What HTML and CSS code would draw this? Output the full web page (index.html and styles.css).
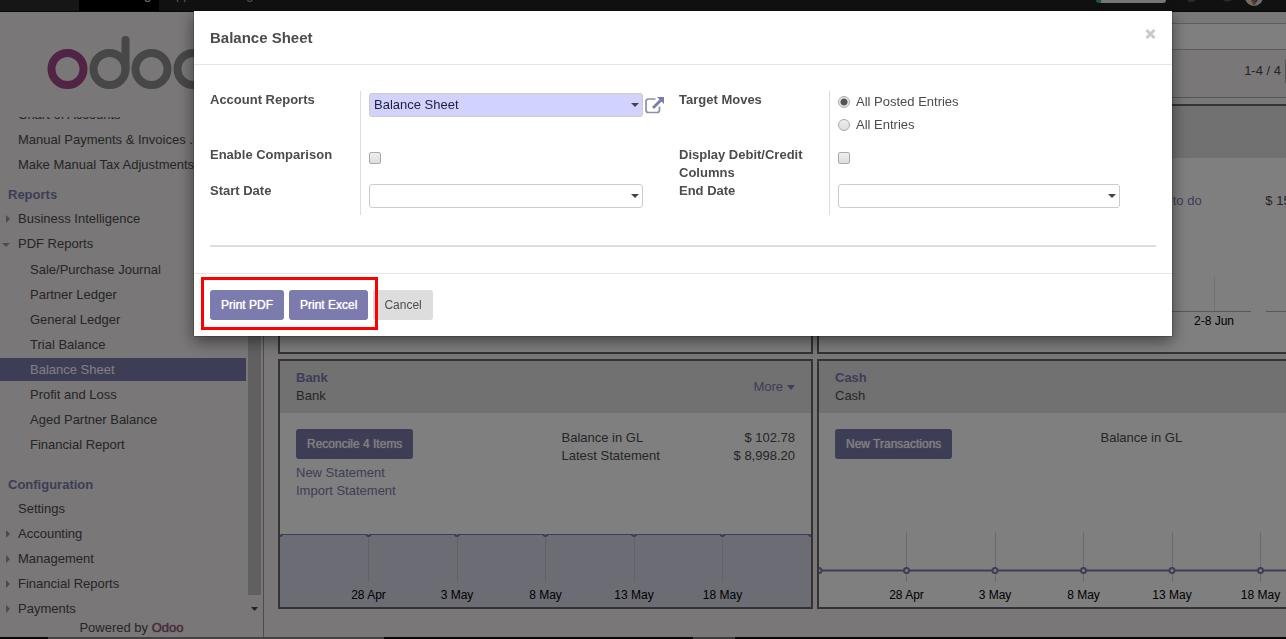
FILE: index.html
```html
<!DOCTYPE html>
<html lang="en">
<head>
<meta charset="utf-8">
<title>Balance Sheet - Odoo</title>
<link rel="stylesheet" href="styles.css">
</head>
<body>
<div class="app">
  <nav class="topbar">
    <a class="tab tab-first" href="#">Dashboard</a>
    <a class="tab active" href="#">Accounting</a>
    <a class="tab" href="#">Apps</a>
    <a class="tab" href="#">Settings</a>
    <span class="spacer"></span>
    <span class="planner"></span>
    <svg class="tray" width="50" height="4" viewBox="0 0 50 4"><path d="M2 0h9l-3 2H4zM37 0h10l-4 2z" fill="#555"/></svg>
    <svg class="avatar" width="18" height="7" viewBox="0 0 18 7"><path d="M0-3a9 9 0 0 0 18 0z" fill="#ddd"/><path d="M6 0l3 6 3-6z" fill="#a87448"/><path d="M11 0l-1 4 3-4z" fill="#558"/></svg>
  </nav>
  <div class="columns">
    <aside class="sidebar">
      <div class="logo">
        <svg width="170" height="56" viewBox="0 0 170 56" fill="none" stroke-width="8">
          <circle cx="20.500" cy="34" r="16" stroke="#a24689"/>
          <g stroke="#8f8f8f"><circle cx="62.500" cy="34" r="16"/><circle cx="104.500" cy="34" r="16"/><circle cx="146.500" cy="34" r="16"/><path d="M78.500 34V5" stroke-linecap="round"/></g>
        </svg>
      </div>
      <div class="menu-area">
        <div class="menu">
          <ul>
            <li><a href="#">Chart of Accounts</a></li>
            <li><a href="#">Manual Payments &amp; Invoices ...</a></li>
            <li><a href="#">Make Manual Tax Adjustments</a></li>
          </ul>
          <h4>Reports</h4>
          <ul>
            <li class="closed"><a href="#">Business Intelligence</a></li>
            <li class="open"><a href="#">PDF Reports</a>
              <ul class="sub">
                <li><a href="#">Sale/Purchase Journal</a></li>
                <li><a href="#">Partner Ledger</a></li>
                <li><a href="#">General Ledger</a></li>
                <li><a href="#">Trial Balance</a></li>
                <li><a class="selected" href="#">Balance Sheet</a></li>
                <li><a href="#">Profit and Loss</a></li>
                <li><a href="#">Aged Partner Balance</a></li>
                <li><a href="#">Financial Report</a></li>
              </ul>
            </li>
          </ul>
          <h4 class="config">Configuration</h4>
          <ul>
            <li><a href="#">Settings</a></li>
            <li class="closed"><a href="#">Accounting</a></li>
            <li class="closed"><a href="#">Management</a></li>
            <li class="closed"><a href="#">Financial Reports</a></li>
            <li class="closed"><a href="#">Payments</a></li>
          </ul>
        </div>
        <div class="scrollbar"><div class="thumb"></div><div class="arrow"><svg width="7" height="4" viewBox="0 0 7 4"><path d="M0 0h7L3.500 4z" fill="#444"/></svg></div></div>
      </div>
      <footer class="powered">Powered by <a href="#">Odoo</a></footer>
    </aside>
    <main class="main">
      <div class="searchbar"></div>
      <div class="control"><span>1-4 / 4</span><span class="pager"></span></div>
      <div class="cards">
        <section class="card"><header></header></section>
        <section class="card">
          <header></header>
          <div class="card-body invoices">
            <div></div>
            <dl><div><dt><a href="#">4 Payments to do</a></dt><dd>$ 15,000.00</dd></div></dl>
          </div>
          <svg class="chart" viewBox="0 0 531 80">
            <path d="M395.500 4V39" stroke="#e4e4e4"/><path d="M300 39.500H432M447 39.500H531" stroke="#a9b4bf"/>
            <text x="395" y="53">2-8 Jun</text>
          </svg>
        </section>
        <section class="card">
          <header><div><a class="title" href="#">Bank</a><div>Bank</div></div>
            <a class="more" href="#">More <svg width="8" height="5" viewBox="0 0 8 5"><path d="M0 0h8L4 5z" fill="#7c7bad"/></svg></a></header>
          <div class="card-body">
            <div><button class="btn primary">Reconcile 4 Items</button><a class="link" href="#">New Statement</a><a class="link" href="#">Import Statement</a></div>
            <dl><div><dt>Balance in GL</dt><dd>$ 102.78</dd></div><div><dt>Latest Statement</dt><dd>$ 8,998.20</dd></div></dl>
          </div>
          <svg class="chart" viewBox="0 0 531 80">
            <rect y="7" width="531" height="73" fill="#d8d8e8"/>
            <path d="M88.500 7V55M177.500 7V55M265.500 7V55M354.500 7V55M442.500 7V55" stroke="#c2c2d0"/>
            <path d="M0 7.500H531" stroke="#7c7bad"/>
            <g class="dots half"><path d="M-2 7a2 2 0 0 0 4 0M86.500 7a2 2 0 0 0 4 0M175 7a2 2 0 0 0 4 0M263.500 7a2 2 0 0 0 4 0M352 7a2 2 0 0 0 4 0M440.500 7a2 2 0 0 0 4 0M529 7a2 2 0 0 0 4 0"/></g>
            <text x="88.500" y="72">28 Apr</text><text x="177" y="72">3 May</text><text x="265.500" y="72">8 May</text><text x="354" y="72">13 May</text><text x="442.500" y="72">18 May</text>
          </svg>
        </section>
        <section class="card">
          <header><div><a class="title" href="#">Cash</a><div>Cash</div></div></header>
          <div class="card-body">
            <div><button class="btn primary">New Transactions</button></div>
            <dl><div><dt>Balance in GL</dt><dd>$ 0.00</dd></div></dl>
          </div>
          <svg class="chart" viewBox="0 0 531 80">
            <path d="M87.500 5V55M176.500 5V55M264.500 5V55M353.500 5V55M441.500 5V55" stroke="#d4d4d4"/>
            <path d="M0 43.500H531" stroke="#7c7bad" stroke-width="2"/>
            <g class="dots"><circle cy="43.500" r="2.500"/><circle cx="87.500" cy="43.500" r="2.500"/><circle cx="176" cy="43.500" r="2.500"/><circle cx="264.500" cy="43.500" r="2.500"/><circle cx="353" cy="43.500" r="2.500"/><circle cx="441.500" cy="43.500" r="2.500"/></g>
            <text x="87.500" y="72">28 Apr</text><text x="176" y="72">3 May</text><text x="264.500" y="72">8 May</text><text x="353" y="72">13 May</text><text x="441.500" y="72">18 May</text>
          </svg>
        </section>
      </div>
    </main>
  </div>
  <div class="strip"></div>
</div>

<div class="backdrop">
  <div class="modal" role="dialog" aria-labelledby="dialog-title">
    <header class="modal-header">
      <h3 id="dialog-title">Balance Sheet</h3>
      <button class="close" aria-label="Close"><svg width="11" height="10" viewBox="0 0 11 10"><path d="M1.500 1l8 8M9.500 1l-8 8" stroke="#c8c8c8" stroke-width="2.800"/></svg></button>
    </header>
    <form class="modal-body">
      <div class="groups">
        <div class="group">
          <label for="report">Account Reports</label>
          <div class="field">
            <div class="combo"><select id="report" class="required"><option>Balance Sheet</option></select><svg class="caret" width="8" height="4" viewBox="0 0 8 4"><path d="M0 0h8L4 4z" fill="#444"/></svg></div>
            <button type="button" class="external" aria-label="Open record"><svg width="20" height="17" viewBox="0 0 20 17" fill="none" stroke="#7c7bad"><path d="M10.500 2H3.500Q1 2 1 4.500V13q0 2.500 2.500 2.500H12q2.500 0 2.500-2.500V9.500" stroke="#8f8fab" stroke-width="1.700"/><path d="M8 11l8-8" stroke-width="2.800"/><path d="M12 0h7v7z" fill="#7c7bad" stroke="none"/></svg></button>
          </div>
          <label for="compare">Enable Comparison</label>
          <div class="field"><input class="check" type="checkbox" id="compare"></div>
          <label for="start">Start Date</label>
          <div class="field"><div class="combo"><input id="start" type="text"><svg class="caret" width="8" height="4" viewBox="0 0 8 4"><path d="M0 0h8L4 4z" fill="#444"/></svg></div></div>
        </div>
        <div class="group">
          <span class="label">Target Moves</span>
          <div class="field radios">
            <label><input type="radio" name="moves" checked>All Posted Entries</label>
            <label><input type="radio" name="moves">All Entries</label>
          </div>
          <label for="debit">Display Debit/Credit Columns</label>
          <div class="field"><input class="check" type="checkbox" id="debit"></div>
          <label for="end">End Date</label>
          <div class="field"><div class="combo"><input id="end" type="text"><svg class="caret" width="8" height="4" viewBox="0 0 8 4"><path d="M0 0h8L4 4z" fill="#444"/></svg></div></div>
        </div>
      </div>
      <hr>
    </form>
    <footer class="modal-footer">
      <div class="print"><button class="btn primary">Print PDF</button><button class="btn primary">Print Excel</button></div>
      <button class="btn">Cancel</button>
    </footer>
  </div>
</div>
</body>
</html>
```
FILE: styles.css
```css
* { box-sizing: border-box; }
body { margin: 0; overflow: hidden; color: #4c4c4c; font: 13px/18px "Liberation Sans", Arial, sans-serif; }
a { color: #7c7bad; text-decoration: none; }
ul { list-style: none; margin: 0; padding: 0; }
button, input, select { font: inherit; }

.app { display: flex; flex-direction: column; height: 100vh; background: #f2eeee; }

.topbar { display: flex; align-items: flex-end; height: 12px; flex: none; overflow: hidden; background: #222; border-bottom: 1px solid #111; }
.tab { padding: 14px 8px 7px; color: #aaa; }
.tab-first { width: 79px; background: #2c2c2c; }
.tab.active { background: #000; color: #fff; }
.spacer { flex: 1; }
.planner { width: 70px; height: 3px; margin-bottom: 8px; border-left: 5px solid #3a9; border-radius: 0 0 3px 3px; background: #eee; }
.tray { margin: 0 10px 7px 19px; }
.avatar { margin: 0 23px 4px 0; }

.columns { display: flex; flex: 1; min-height: 0; }
.sidebar { display: flex; flex-direction: column; width: 264px; flex: none; border-right: 1px solid #999; }
.logo { height: 105px; flex: none; padding: 23px 0 0 47px; }
.menu-area { display: flex; flex: 1; min-height: 0; overflow: hidden; margin-bottom: -4px; }
.menu { flex: 1; margin-top: -15px; }
.menu li a { display: block; height: 23px; padding: 3px 0 2px 18px; color: #4c4c4c; white-space: nowrap; }
.menu ul { display: grid; gap: 2px; margin: 1px 2px 1px 0; }
.menu h4 { margin: 6px 0 0; padding: 4px 8px 2px; color: #7c7bad; font-size: 13px; }
.menu h4.config { margin-top: 16px; }
.menu ul.sub { margin: 3px 0 0; }
.menu .sub a { padding-left: 30px; }
.menu a.selected { background: #7c7bad; color: #fff; }
.closed, .open { position: relative; }
.closed::before, .open::before { content: ""; position: absolute; left: 6px; top: 8px; border: 4px solid transparent; border-left-color: #999; border-right: 0; }
.open::before { left: 2px; top: 11px; border: 4px solid transparent; border-top-color: #999; border-bottom: 0; }
.scrollbar { display: flex; flex-direction: column; width: 13px; margin-right: 2px; }
.thumb { flex: 1; background: #c1c1c1; }
.arrow { display: flex; align-items: center; justify-content: center; height: 28px; }
.powered { flex: none; text-align: center; }
.powered a { color: #875a7b; text-shadow: 0 0 1px #875a7b; }

.main { flex: 1; min-width: 0; overflow: hidden; }
.searchbar { height: 27px; margin-top: 11px; border: 1px solid #bbb; border-width: 1px 0; background: #fff; }
.control { display: flex; justify-content: flex-end; align-items: center; gap: 4px; height: 48px; padding-bottom: 6px; border-bottom: 1px solid #aaa; }
.pager { width: 1px; height: 24px; background: #aaa; }
.cards { display: grid; grid-template-columns: repeat(2, minmax(535px, 1fr)); gap: 5px 4px; padding: 6px 0 0 14px; }
.card { display: flex; flex-direction: column; min-height: 250px; border: 2px solid #666; background: #fff; }
.card header { display: flex; align-items: center; justify-content: space-between; min-height: 52px; padding: 8px 16px; background: #e2e2e2; }
.title { font-weight: bold; }
.more { display: flex; align-items: center; gap: 4px; }
.card-body { display: grid; grid-template-columns: 1fr 1fr; flex: 1; padding: 16px 0; }
.card-body > * { margin: 0 16px; }
.invoices { padding-top: 34px; }
dl > div { display: flex; justify-content: space-between; }
dd { margin: 0; }
.link { display: block; }
.card-body .btn { margin-bottom: 5px; }
.chart { display: block; width: 100%; height: 80px; }
.chart text { font-size: 12px; text-anchor: middle; fill: #000; }
.dots { fill: #fff; stroke: #7c7bad; stroke-width: 2; }
.half { fill: #d8d8e8; }
.strip { height: 2px; flex: none; background: linear-gradient(90deg, #111 48px, #8a8486 48px 384px, #111 384px 693px, #777 693px 735px, #111 735px); }

.btn { display: inline-block; height: 30px; padding: 0 11px; border: 0; border-radius: 3px; background: #ddd; color: #4c4c4c; font-size: 12px; line-height: 30px; white-space: nowrap; }
.btn.primary { background: #7c7bad; color: #fff; text-shadow: 0 0 1px #fff; }
.card .btn { display: block; }

.backdrop { position: fixed; inset: 0; padding: 11px 114px 0 194px; background: rgba(0, 0, 0, .5); }
.modal { background: #fff; box-shadow: 0 5px 15px rgba(0, 0, 0, .5), 0 0 1px #000; }
.modal-header { display: flex; align-items: center; justify-content: space-between; height: 54px; padding: 0 16px; border-bottom: 1px solid #e5e5e5; }
.modal-header h3 { margin: 0; font-size: 15px; }
.close { display: flex; padding: 0; margin-bottom: 7px; border: 0; background: none; }
.modal-body { padding: 26px 16px; }
.groups { display: grid; grid-template-columns: 469fr 477fr; }
.group { display: grid; grid-template-columns: 150px 1fr; grid-template-rows: 55px 36px 33px; }
.group > label, .label { padding-right: 16px; font-weight: bold; }
.field { display: flex; align-items: flex-start; padding: 2px 0 0 8px; border-left: 1px solid #ddd; }
.combo { position: relative; flex: 1; margin-right: 36px; }
.combo input, .combo select { display: block; width: 100%; height: 24px; padding: 0 4px; border: 1px solid #ccc; border-radius: 3px; background: #fff; color: #1f1f3d; appearance: none; }
.combo .required { background: #d2d2ff; }
.caret { position: absolute; right: 4px; top: 10px; }
.external { display: flex; margin: 4px 14px 0 -34px; padding: 0; border: 0; background: none; }
.check, .radios input { appearance: none; width: 12px; height: 12px; margin: 4px 0 0; border: 1px solid #aaa; border-radius: 2px; background: linear-gradient(#eee, #ddd); }
.radios { flex-direction: column; gap: 5px; }
.radios label { display: flex; align-items: center; gap: 6px; }
.radios input { margin: 0; border-radius: 50%; }
.radios input:checked { background: radial-gradient(circle, #555 3px, #e8e8e8 4px); }
hr { height: 2px; margin: 30px 0 0; border: 0; background: #ddd; }
.modal-footer { display: flex; gap: 5px; padding: 16px; border-top: 1px solid #e5e5e5; }
.print { position: relative; display: flex; gap: 5px; }
.print::after { content: ""; position: absolute; inset: -13px -10px -10px -9px; border: 3px solid #f00; pointer-events: none; }
```
